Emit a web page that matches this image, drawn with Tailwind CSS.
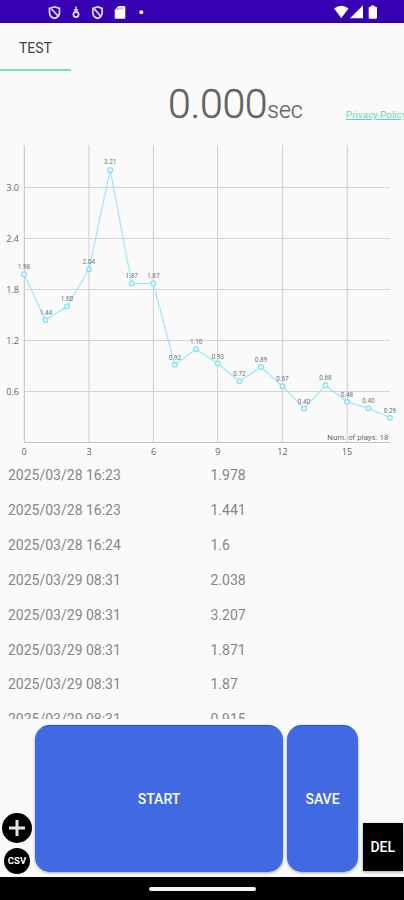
<!DOCTYPE html>
<html lang="en">
<head>
  <meta charset="UTF-8" />
  <meta name="viewport" content="width=device-width, initial-scale=1" />
  <title>Timer</title>
  <script src="https://cdn.jsdelivr.net/npm/@tailwindcss/browser@4"></script>
</head>
<body class="bg-[#fafafa] font-['Roboto',sans-serif]">
  <div class="w-[404px] h-[900px] flex flex-col overflow-hidden bg-[#fafafa]">

    <!-- Status bar -->
    <header class="h-[23px] shrink-0 bg-[#3700b3] border-b border-[#2800a0]">
      <svg class="block" width="404" height="22" viewBox="0 0 404 22" fill="none">
        <g stroke="#e6e0f6" stroke-width="1.7">
          <path d="M54.5 6.8l5 1.6v4c0 3-2 5-5 6-3-1-5-3-5-6v-4z" />
          <path d="M51.5 9l6.5 7" />
          <path d="M97.5 6.8l4.6 1.6v4c0 3-1.8 5-4.6 6-2.8-1-4.6-3-4.6-6v-4z" />
          <path d="M94.5 9l6 7" />
          <path d="M76 6.5v6M73.8 10h4.4" stroke-width="1.5" />
          <circle cx="76" cy="14.5" r="2.6" />
        </g>
        <path d="M118.5 6h5.5q1.3 0 1.3 1.3v10.2q0 1.3-1.3 1.3h-8q-1.3 0-1.3-1.3v-7.5z" fill="#fff" />
        <path d="M117.8 8v2M120 7.5v2M122.2 7.5v2" stroke="#3700b3" stroke-width=".6" />
        <circle cx="141.3" cy="12.3" r="2" fill="#fff" />
        <path d="M334 8.5q7.3-5.5 14.6 0l-7.3 9.5z" fill="#fff" />
        <path d="M350 18.3h13v-13z" fill="#fff" />
        <path d="M371 5.5h3.5v1.3h1.2q1.3 0 1.3 1.3v9.4q0 1.3-1.3 1.3h-5.7q-1.3 0-1.3-1.3v-9.4q0-1.3 1.3-1.3h1z" fill="#fff" />
      </svg>
    </header>

    <!-- Tabs -->
    <nav class="h-[48px] shrink-0 flex">
      <div class="w-[71px] border-b-2 border-[#78dcca] flex items-center justify-center text-[14px] text-[#444] pt-1">TEST</div>
    </nav>

    <!-- Timer -->
    <section class="h-[64px] shrink-0 flex items-end pl-[168px] whitespace-nowrap text-[#626262]">
      <div class="w-[178px] shrink-0 flex items-baseline pb-[7px]">
        <span class="text-[41px] leading-[48px] font-light tracking-[-0.3px] [-webkit-text-stroke:0.4px_#626262]">0.000</span>
        <span class="text-[23px] leading-[26px] font-light [-webkit-text-stroke:0.2px_#626262]">sec</span>
      </div>
      <a href="#" class="text-[9.5px] leading-[12px] pb-[14px] tracking-[0.15px] text-[#57d9b8] underline">Privacy Policy</a>
    </section>

    <!-- Chart -->
    <section class="h-[323px] shrink-0">
      <svg class="block font-['Open_Sans',sans-serif]" width="404" height="323" viewBox="0 135 404 323">
        <g stroke="#d5d5d5" stroke-width="1.2">
          <path d="M24 187.5H390M24 238.5H390M24 289.5H390M24 340.5H390M24 391.5H390" />
          <path d="M88.9 145V442.5M153.4 145V442.5M217.6 145V442.5M282.5 145V442.5M347.3 145V442.5" />
        </g>
        <path d="M24.3 145V442.5H390" fill="none" stroke="#c2c2c2" />
        <g fill="#666" font-size="9" text-anchor="end">
          <text x="19" y="190.5">3.0</text>
          <text x="19" y="241.5">2.4</text>
          <text x="19" y="292.5">1.8</text>
          <text x="19" y="343.5">1.2</text>
          <text x="19" y="394.5">0.6</text>
        </g>
        <g fill="#666" font-size="9" text-anchor="middle">
          <text x="24" y="455.3">0</text>
          <text x="89" y="455.3">3</text>
          <text x="153.5" y="455.3">6</text>
          <text x="217.8" y="455.3">9</text>
          <text x="282.5" y="455.3">12</text>
          <text x="347" y="455.3">15</text>
        </g>
        <polyline fill="none" stroke="#98e9f9" stroke-width="1.2" points="24,274.3 45.5,320 67,306.5 88.9,269.3 110.2,169.9 131.7,283.5 153.3,283.5 174.8,364.8 196.2,349.2 217.7,363.5 239.5,381.2 261,367 282.5,386.3 304,408.6 325.5,385.3 347,401.8 368.5,408.4 390,417.8" />
        <g fill="#fafafa" stroke="#80e3f8" stroke-width="1.3">
          <circle cx="24" cy="274.3" r="2.3" />
          <circle cx="45.5" cy="320" r="2.3" />
          <circle cx="67" cy="306.5" r="2.3" />
          <circle cx="88.9" cy="269.3" r="2.3" />
          <circle cx="110.2" cy="169.9" r="2.3" />
          <circle cx="131.7" cy="283.5" r="2.3" />
          <circle cx="153.3" cy="283.5" r="2.3" />
          <circle cx="174.8" cy="364.8" r="2.3" />
          <circle cx="196.2" cy="349.2" r="2.3" />
          <circle cx="217.7" cy="363.5" r="2.3" />
          <circle cx="239.5" cy="381.2" r="2.3" />
          <circle cx="261" cy="367" r="2.3" />
          <circle cx="282.5" cy="386.3" r="2.3" />
          <circle cx="304" cy="408.6" r="2.3" />
          <circle cx="325.5" cy="385.3" r="2.3" />
          <circle cx="347" cy="401.8" r="2.3" />
          <circle cx="368.5" cy="408.4" r="2.3" />
          <circle cx="390" cy="417.8" r="2.3" />
        </g>
        <g class="font-['Roboto',sans-serif]" fill="#707070" font-size="6.3" text-anchor="middle">
          <text x="24" y="269">1.98</text>
          <text x="46" y="315">1.44</text>
          <text x="67" y="301">1.60</text>
          <text x="88.9" y="264">2.04</text>
          <text x="110.2" y="164">3.21</text>
          <text x="131.7" y="278.3">1.87</text>
          <text x="153.3" y="278.3">1.87</text>
          <text x="174.8" y="360">0.92</text>
          <text x="196.2" y="344">1.10</text>
          <text x="217.7" y="358.5">0.93</text>
          <text x="239.5" y="376">0.72</text>
          <text x="261" y="361.5">0.89</text>
          <text x="282.5" y="381.3">0.67</text>
          <text x="304" y="403.5">0.40</text>
          <text x="325.5" y="380">0.68</text>
          <text x="347" y="396.5">0.48</text>
          <text x="368.5" y="403">0.40</text>
          <text x="390" y="412.5">0.29</text>
        </g>
        <text class="font-['Roboto',sans-serif]" x="327.3" y="440.3" font-size="7.8" fill="#6a6a6a" textLength="61">Num. of plays: 18</text>
      </svg>
    </section>

    <!-- Records -->
    <ul class="h-[261px] shrink-0 overflow-hidden pt-[0.5px] text-[14px] text-[#868686]">
      <li class="h-[34.85px] flex items-center pl-2"><span class="w-[202.5px]">2025/03/28 16:23</span><span>1.978</span></li>
      <li class="h-[34.85px] flex items-center pl-2"><span class="w-[202.5px]">2025/03/28 16:23</span><span>1.441</span></li>
      <li class="h-[34.85px] flex items-center pl-2"><span class="w-[202.5px]">2025/03/28 16:24</span><span>1.6</span></li>
      <li class="h-[34.85px] flex items-center pl-2"><span class="w-[202.5px]">2025/03/29 08:31</span><span>2.038</span></li>
      <li class="h-[34.85px] flex items-center pl-2"><span class="w-[202.5px]">2025/03/29 08:31</span><span>3.207</span></li>
      <li class="h-[34.85px] flex items-center pl-2"><span class="w-[202.5px]">2025/03/29 08:31</span><span>1.871</span></li>
      <li class="h-[34.85px] flex items-center pl-2"><span class="w-[202.5px]">2025/03/29 08:31</span><span>1.87</span></li>
      <li class="h-[34.85px] flex items-center pl-2"><span class="w-[202.5px]">2025/03/29 08:31</span><span>0.915</span></li>
    </ul>

    <!-- Actions -->
    <section class="h-[158px] shrink-0 flex items-end pb-[5.5px] text-[14px] font-medium text-white">
      <div class="w-[35px] shrink-0 flex flex-col items-center gap-[5px] pr-px -mb-[2px]">
        <button class="size-[29.5px] rounded-full bg-black flex items-center justify-center">
          <svg width="16" height="16" viewBox="0 0 16 16"><path d="M8 0v16M0 8h16" stroke="#e4e4e4" stroke-width="3" /></svg>
        </button>
        <button class="size-[26px] rounded-full bg-black text-[9.5px] font-bold pt-px">CSV</button>
      </div>
      <button class="w-[248px] h-[147px] shrink-0 rounded-[15px] bg-[#4169e1] border-t border-[#1f55d0] pt-px shadow-[0_1px_3px_rgba(0,0,0,0.35)]">START</button>
      <button class="ml-1 w-[71px] h-[147px] shrink-0 rounded-[15px] bg-[#4169e1] border-t border-[#1f55d0] pt-px shadow-[0_1px_3px_rgba(0,0,0,0.35)]">SAVE</button>
      <button class="ml-[4.5px] mb-px w-[40.5px] h-[48px] shrink-0 bg-black pt-px shadow-[0_1px_3px_rgba(0,0,0,0.35)]">DEL</button>
    </section>

    <!-- System navigation -->
    <footer class="flex-1 bg-black flex justify-center pt-[9.5px]">
      <div class="w-[107px] h-[4.5px] rounded-full bg-[#f4f4f4]"></div>
    </footer>
  </div>
</body>
</html>
